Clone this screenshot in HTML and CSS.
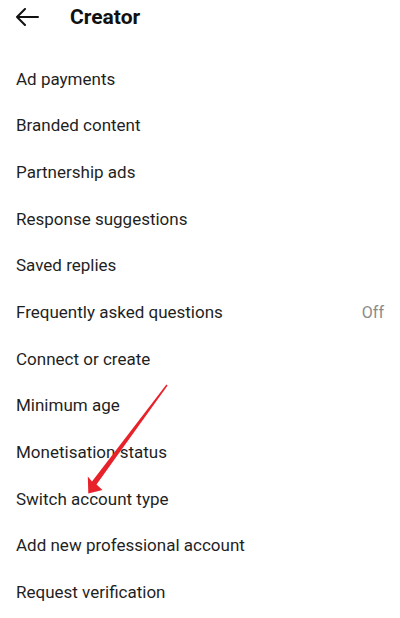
FILE: index.html
```html
<!DOCTYPE html>
<html>
<head>
<meta charset="utf-8">
<link rel="stylesheet" href="styles.css">
</head>
<body>
<div class="screen">
  <header class="topbar">
    <svg class="back" width="24" height="18" viewBox="0 0 24 18" aria-hidden="true">
      <path d="M23 9H2M10 1L2 9l8 8" fill="none" stroke="#111" stroke-width="2" stroke-linecap="round" stroke-linejoin="round"/>
    </svg>
    <h1 class="title">Creator</h1>
  </header>
  <ul class="menu">
    <li class="item">Ad payments</li>
    <li class="item">Branded content</li>
    <li class="item">Partnership ads</li>
    <li class="item">Response suggestions</li>
    <li class="item">Saved replies</li>
    <li class="item"><span>Frequently asked questions</span><span class="value">Off</span></li>
    <li class="item">Connect or create</li>
    <li class="item">Minimum age</li>
    <li class="item">Monetisation status</li>
    <li class="item">Switch account type</li>
    <li class="item">Add new professional account</li>
    <li class="item">Request verification</li>
  </ul>
  <svg class="pointer" width="400" height="618" viewBox="0 0 400 618" aria-hidden="true">
    <polygon points="166.4,384.6 167.6,385.4 96.5,484.5 102.5,490 88.3,493.5 87.8,476.5 92,481.5" fill="#e8222b"/>
  </svg>
</div>
</body>
</html>
```
FILE: styles.css
```css
* { box-sizing: border-box; }
html, body { margin: 0; padding: 0; background: #fff; }
body { font-family: Roboto, "Noto Sans", "Liberation Sans", sans-serif; color: #111; }
.screen { position: relative; width: 400px; height: 618px; overflow: hidden; }
.topbar { display: flex; align-items: center; height: 34px; padding-left: 15px; }
.back { display: block; }
.title { margin: 0 0 0 31px; font-size: 21px; font-weight: 700; color: #111; }
.menu { list-style: none; margin: 21.5px 0 0; padding: 0; }
.item { display: flex; justify-content: space-between; align-items: center; height: 46.67px; padding: 0 16px; font-size: 17px; color: #1f1f1f; }
.value { color: #8a8a8a; font-size: 16px; }
.pointer { position: absolute; left: 0; top: 0; pointer-events: none; }
```
